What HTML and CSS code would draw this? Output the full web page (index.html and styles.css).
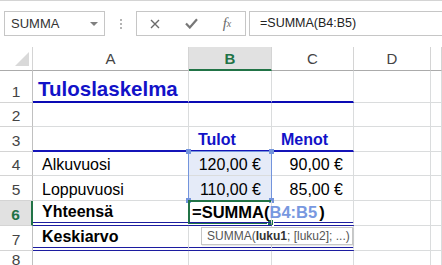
FILE: index.html
```html
<!DOCTYPE html>
<html lang="fi">
<head>
    <meta charset="UTF-8">
    <title>Tuloslaskelma</title>
    <link rel="stylesheet" href="styles.css">
</head>
<body>
    <div class="formula-bar">
        <div class="name-box"><span>SUMMA</span><span class="arrow"></span></div>
        <div class="grip"><i></i><i></i><i></i></div>
        <div class="fx-buttons">
            <span class="slot">
                <svg width="10" height="10" viewBox="0 0 10 10"><path d="M1 1 L9 9 M9 1 L1 9" stroke="#6b6b6b" stroke-width="1.4" fill="none"/></svg>
            </span>
            <span class="slot">
                <svg width="13" height="11" viewBox="0 0 13 11"><path d="M1 5.5 L4.8 9.5 L12 1.2" stroke="#777" stroke-width="2.2" fill="none"/></svg>
            </span>
            <span class="slot fx"><i>f</i><sub>x</sub></span>
        </div>
        <div class="formula-input">=SUMMA(B4:B5)</div>
    </div>

    <div class="sheet">
        <!-- otsikkorivi -->
        <div class="corner"><svg width="33" height="23" viewBox="0 0 33 23"><polygon points="15,19 29,5 29,19" fill="#d9d9d9"/></svg></div>
        <div class="col-head">A</div>
        <div class="col-head active">B</div>
        <div class="col-head">C</div>
        <div class="col-head">D</div>
        <div class="col-head"></div>

        <!-- rivi 1 -->
        <div class="row-head">1</div>
        <div class="cell title line-thick">Tuloslaskelma</div>
        <div class="cell line-thick"></div>
        <div class="cell line-thick"></div>
        <div class="cell"></div>
        <div class="cell"></div>

        <!-- rivi 2 -->
        <div class="row-head">2</div>
        <div class="cell"></div>
        <div class="cell"></div>
        <div class="cell"></div>
        <div class="cell"></div>
        <div class="cell"></div>

        <!-- rivi 3 -->
        <div class="row-head">3</div>
        <div class="cell line-mid"></div>
        <div class="cell heading line-mid">Tulot</div>
        <div class="cell heading line-mid">Menot</div>
        <div class="cell"></div>
        <div class="cell"></div>

        <!-- rivi 4 -->
        <div class="row-head">4</div>
        <div class="cell">Alkuvuosi</div>
        <div class="cell num in-range">120,00 €</div>
        <div class="cell num">90,00 €</div>
        <div class="cell"></div>
        <div class="cell"></div>

        <!-- rivi 5 -->
        <div class="row-head">5</div>
        <div class="cell">Loppuvuosi</div>
        <div class="cell num in-range">110,00 €</div>
        <div class="cell num">85,00 €</div>
        <div class="cell"></div>
        <div class="cell"></div>

        <!-- rivi 6 -->
        <div class="row-head active">6</div>
        <div class="cell bold line-double">Yhteensä</div>
        <div class="cell edit line-double">=SUMMA(<span class="ref">B4:B5</span><span class="caret"></span>)</div>
        <div class="cell line-double"></div>
        <div class="cell"></div>
        <div class="cell"></div>

        <!-- rivi 7 -->
        <div class="row-head">7</div>
        <div class="cell bold line-double">Keskiarvo</div>
        <div class="cell line-double"></div>
        <div class="cell line-double"></div>
        <div class="cell"></div>
        <div class="cell"></div>

        <!-- rivi 8 -->
        <div class="row-head">8</div>
        <div class="cell"></div>
        <div class="cell"></div>
        <div class="cell"></div>
        <div class="cell"></div>
        <div class="cell"></div>

        <!-- valinnat ja vihje -->
        <div class="range">
            <span class="handle tl"></span><span class="handle tr"></span>
            <span class="handle bl"></span><span class="handle br"></span>
        </div>
        <div class="active-frame"><span class="fill-handle"></span></div>
        <div class="tooltip">SUMMA(<b>luku1</b>; [luku2]; ...)</div>
    </div>
</body>
</html>
```

FILE: styles.css
```css
body {
    margin: 0;
    background-color: #fff;
    font-family: "Liberation Sans", Arial, sans-serif;
    color: #000;
    width: 442px;
    height: 265px;
    overflow: hidden;
}

/* Kaavarivi */
.formula-bar {
    height: 47px;
    box-sizing: border-box;
    border-top: 1px solid #d4d4d4;
    padding: 10px 0 0 4px;
    display: flex;
    align-items: flex-start;
}

.name-box {
    width: 101px;
    height: 25px;
    box-sizing: border-box;
    border: 1px solid #c6c6c6;
    display: flex;
    align-items: center;
    justify-content: space-between;
    padding: 0 6px 0 6px;
    font-size: 13px;
    color: #333;
}

.arrow {
    border-left: 4px solid transparent;
    border-right: 4px solid transparent;
    border-top: 4px solid #808080;
}

.grip {
    width: 31px;
    height: 25px;
    display: flex;
    flex-direction: column;
    align-items: center;
    justify-content: center;
    gap: 2px;
}

.grip i {
    width: 2px;
    height: 2px;
    background-color: #b4b4b4;
}

.fx-buttons {
    width: 110px;
    height: 25px;
    box-sizing: border-box;
    border: 1px solid #c6c6c6;
    display: flex;
    align-items: center;
}

.slot {
    width: 36px;
    display: flex;
    justify-content: center;
    align-items: center;
}

.fx {
    font-family: "Liberation Serif", serif;
    font-size: 15px;
    color: #6b6b6b;
}

.fx sub {
    font-size: 10px;
    font-style: italic;
    vertical-align: -1px;
}

.formula-input {
    flex: 1;
    margin-left: 3px;
    height: 25px;
    box-sizing: border-box;
    border: 1px solid #c6c6c6;
    border-right: none;
    padding-left: 10px;
    font-size: 12.5px;
    line-height: 23px;
    color: #222;
}

/* Taulukko */
.sheet {
    position: relative;
    display: grid;
    grid-template-columns: 33px 156px 83px 82px 77px 1fr;
    grid-template-rows: 24px 32px 24px 25px 24px 25px 25px 25px 1fr;
    height: 218px;
}

.corner,
.col-head {
    box-sizing: border-box;
    border-bottom: 1px solid #ababab;
    border-right: 1px solid #d4d4d4;
}

.col-head {
    display: flex;
    align-items: center;
    justify-content: center;
    font-size: 15px;
    color: #444;
}

.col-head.active {
    background-color: #e1e1e1;
    color: #217346;
    font-weight: bold;
    border-bottom: 2px solid #217346;
}

.row-head {
    box-sizing: border-box;
    border-right: 1px solid #c0c0c0;
    border-bottom: 1px solid #d4d4d4;
    display: flex;
    align-items: flex-end;
    justify-content: center;
    padding-bottom: 1px;
    font-size: 15.5px;
    line-height: 18px;
    color: #444;
}

.row-head.active {
    background-color: #e1e1e1;
    color: #217346;
    font-weight: bold;
    border-right: 2px solid #217346;
}

.cell {
    box-sizing: border-box;
    border-right: 1px solid #dadcdd;
    border-bottom: 1px solid #dadcdd;
    display: flex;
    align-items: flex-end;
    padding: 0 0 1px 9px;
    font-size: 16px;
    line-height: 18px;
    white-space: nowrap;
}

.cell.num {
    justify-content: flex-end;
    padding: 0 10px 1px 0;
}

.cell.bold {
    font-weight: bold;
}

.cell.title {
    padding-left: 5px;
    font-size: 20.5px;
    line-height: 22px;
    font-weight: bold;
    color: #1212c8;
}

.cell.heading {
    font-weight: bold;
    color: #1212c8;
}

.line-thick {
    border-bottom: 2px solid #0a0ab4;
}

.line-mid {
    border-bottom: 2px solid #1414b8;
}

.line-double {
    border-bottom: 4px double #1c1ca0;
}

.in-range {
    background-color: #e5ebf8;
}

.cell.edit {
    position: relative;
    z-index: 2;
    overflow: visible;
    padding-left: 3px;
    font-size: 16.5px;
    font-weight: bold;
}

.ref {
    color: #7898e0;
}

.caret {
    display: inline-block;
    width: 1px;
    height: 18px;
    margin: 0 1px 0 1px;
    background-color: #000;
    vertical-align: -3px;
}

/* Alueen ja aktiivisen solun kehykset */
.range {
    position: absolute;
    grid-column: 3 / 4;
    grid-row: 5 / 7;
    top: -1px;
    left: -1px;
    right: 0;
    bottom: 0;
    border: 1px solid #7394dc;
}

.handle {
    position: absolute;
    width: 5px;
    height: 5px;
    background-color: #7394dc;
}

.handle.tl { top: -3px; left: -3px; }
.handle.tr { top: -3px; right: -3px; }
.handle.bl { bottom: -3px; left: -3px; }
.handle.br { bottom: -3px; right: -3px; }

.active-frame {
    position: absolute;
    grid-column: 3 / 4;
    grid-row: 7 / 8;
    top: -1px;
    left: -1px;
    right: 1px;
    bottom: 2px;
    border: 2px solid #217346;
    border-right: none;
}

.fill-handle {
    position: absolute;
    right: -3px;
    bottom: -4px;
    width: 5px;
    height: 5px;
    background-color: #217346;
    border: 1px solid #fff;
}

.tooltip {
    position: absolute;
    grid-column: 3 / 5;
    grid-row: 8 / 9;
    top: 1px;
    left: 12px;
    width: 152px;
    height: 18px;
    box-sizing: border-box;
    border: 1px solid #c6c6c6;
    background-color: #fff;
    box-shadow: 1px 1px 1px rgba(0, 0, 0, 0.08);
    padding-left: 5px;
    font-size: 12px;
    line-height: 16px;
    color: #555;
    white-space: nowrap;
    z-index: 3;
}

.tooltip b {
    color: #333;
}
```
